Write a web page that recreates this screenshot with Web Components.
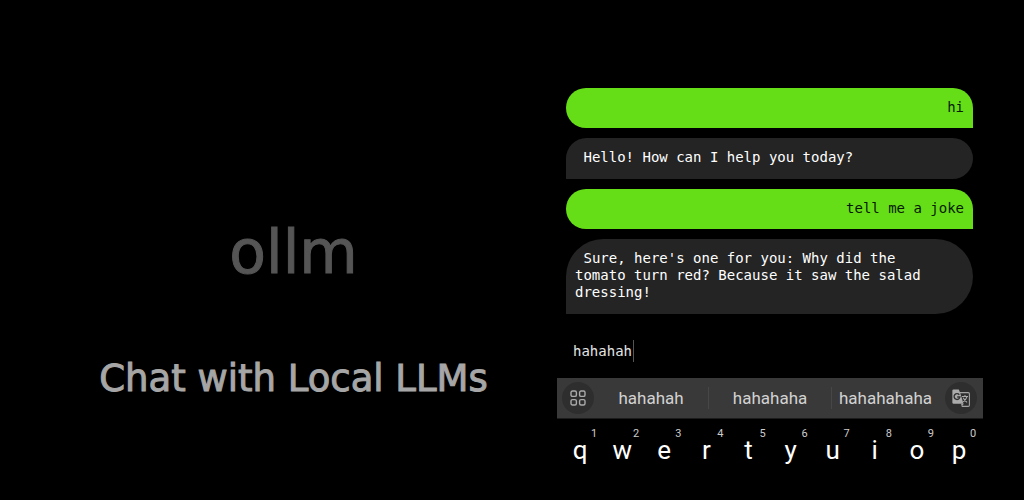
<!DOCTYPE html>
<html lang="en">
<head>
<meta charset="utf-8">
<meta name="viewport" content="width=device-width, initial-scale=1">
<title>ollm</title>
<style>
html, body { margin: 0; background: #000; }
body { font-family: Roboto, sans-serif; color: #fff; }
</style>
</head>
<body>
<ollm-app></ollm-app>
<script>
const define = (name, html, setup) => {
  const template = document.createElement('template');
  template.innerHTML = html;
  customElements.define(name, class extends HTMLElement {
    constructor() {
      super();
      this.attachShadow({ mode: 'open' }).append(template.content.cloneNode(true));
    }
    connectedCallback() { if (setup) setup(this, this.shadowRoot); }
  });
};

define('ollm-hero', `
<style>
:host { display: flex; flex-direction: column; align-items: center; justify-content: center;
  gap: 71px; box-sizing: border-box; padding: 114px 0 0 30px; text-align: center;
  font-family: "DejaVu Sans", sans-serif; -webkit-text-stroke: 1px currentColor; }
h1, p { margin: 0; font-weight: 400; }
h1 { font-size: 60px; line-height: 72px; color: #555; }
p { font-size: 37px; line-height: 40px; color: #a6a6a6; }
</style>
<h1><slot name="title"></slot></h1>
<p><slot></slot></p>`);

define('chat-bubble', `
<style>
:host { display: block; box-sizing: border-box; padding: 11px 24px 13px 9px; line-height: 17px;
  background: #242424; color: #fff; border-radius: 100px 100px 100px 0; }
:host([from="me"]) { padding: 11px 9px 12px; background: #65de17; color: #0a1a02; text-align: right;
  border-radius: 100px 100px 0 100px; }
p { margin: 0; white-space: pre-wrap; }
</style>
<p><slot></slot></p>`);

define('chat-thread', `
<style>
:host { display: flex; flex-direction: column; gap: 10px; padding: 0 10px 0 9px;
  font: 500 14px/17px "DejaVu Sans Mono", monospace; }
</style>
<slot></slot>`);

define('message-field', `
<style>
:host { display: flex; align-items: center; padding: 26px 16px 16px; }
input { field-sizing: content; min-width: 7ch; height: 22px; padding: 0; border: 0; outline: 0;
  background: none; color: #e4e4e4; font: 14px/22px "DejaVu Sans Mono", monospace; }
.caret { width: 1px; height: 22px; margin-left: 1px; background: #555; }
</style>
<input type="text" aria-label="Message" value="hahahah"><span class="caret"></span>`);

define('suggestion-bar', `
<style>
:host { display: grid; grid-template-columns: 32px 114fr 123fr 108fr 38px; align-items: center;
  height: 40px; padding: 0 6px 0 5px; background: #393939; border-bottom: 1px solid #1c1c1c; }
button { padding: 0; border: 0; background: none; color: #d2d2d2; font: 17px/22px Roboto, sans-serif; }
.word + .word { border-left: 1px solid #474747; }
.icon { display: grid; place-items: center; width: 32px; height: 32px; border-radius: 50%;
  background: #2e2e2e; }
.icon:last-child { justify-self: end; }
svg { display: block; }
</style>
<button class="icon" aria-label="Open features menu">
  <svg width="16" height="16" viewBox="0 0 16 16" fill="none" stroke="#aaa" stroke-width="1.4">
    <rect x="1" y="1" width="5.4" height="5.4" rx="1.5"/><rect x="9.6" y="1" width="5.4" height="5.4" rx="1.5"/>
    <rect x="1" y="9.6" width="5.4" height="5.4" rx="1.5"/><rect x="9.6" y="9.6" width="5.4" height="5.4" rx="1.5"/>
  </svg>
</button>
<button class="word">hahahah</button>
<button class="word">hahahaha</button>
<button class="word">hahahahaha</button>
<button class="icon" aria-label="Translate">
  <svg width="18" height="18" viewBox="0 0 18 18" fill="none">
    <path d="M8 3.6h8.2q1.2 0 1.2 1.2v11.4q0 1.2-1.2 1.2H9.8" stroke="#a2a2a2" stroke-width="1.1"/>
    <path d="M1.6.4h5.2l1.1 2.7 3.6 11.6H1.6Q.4 14.7.4 13.5V1.6Q.4.4 1.6.4z" fill="#ababab"/>
    <path d="M7.3 5.7A2.9 2.9 0 1 0 7.9 8H5.2" stroke="#333" stroke-width="1.4"/>
    <path d="M9 14.7h2.8L9.8 17.4z" fill="#a2a2a2"/>
    <path d="M10 7.5h6M13 6v1.5M15 7.6q-.8 3-4 5.3M11.2 8.7q1.4 3 3.9 4.7" stroke="#aaa" stroke-width="1.1"/>
  </svg>
</button>`);

define('key-cap', `
<style>
:host { display: block; }
button { position: relative; display: block; width: 100%; height: 46px; padding: 0; border: 0;
  background: none; color: #fff; font: 26px/46px Roboto, sans-serif; }
.hint { position: absolute; top: 0; left: 50%; width: 28px; text-align: center;
  font-size: 11px; line-height: 14px; color: #ccc; }
</style>
<button><slot></slot><span class="hint"></span></button>`,
(el, root) => { root.querySelector('.hint').textContent = el.getAttribute('hint'); });

define('key-row', `
<style>
:host { display: grid; grid-template-columns: repeat(10, 1fr); padding: 8px 3px 26px 2px; }
</style>
<slot></slot>`);

define('ollm-app', `
<style>
:host { display: grid; grid-template-columns: 557fr 426fr; min-height: 100vh;
  box-sizing: border-box; padding-right: 4%; background: #000; }
main { padding-top: 88px; min-width: 0; }
</style>
<ollm-hero><span slot="title">ollm</span>Chat with Local LLMs</ollm-hero>
<main>
  <chat-thread>
    <chat-bubble from="me">hi</chat-bubble>
    <chat-bubble> Hello! How can I help you today?</chat-bubble>
    <chat-bubble from="me">tell me a joke</chat-bubble>
    <chat-bubble> Sure, here's one for you: Why did the tomato turn red? Because it saw the salad dressing!</chat-bubble>
  </chat-thread>
  <message-field></message-field>
  <suggestion-bar></suggestion-bar>
  <key-row>
    <key-cap hint="1">q</key-cap><key-cap hint="2">w</key-cap><key-cap hint="3">e</key-cap><key-cap hint="4">r</key-cap><key-cap hint="5">t</key-cap><key-cap hint="6">y</key-cap><key-cap hint="7">u</key-cap><key-cap hint="8">i</key-cap><key-cap hint="9">o</key-cap><key-cap hint="0">p</key-cap>
  </key-row>
</main>`);
</script>
</body>
</html>
